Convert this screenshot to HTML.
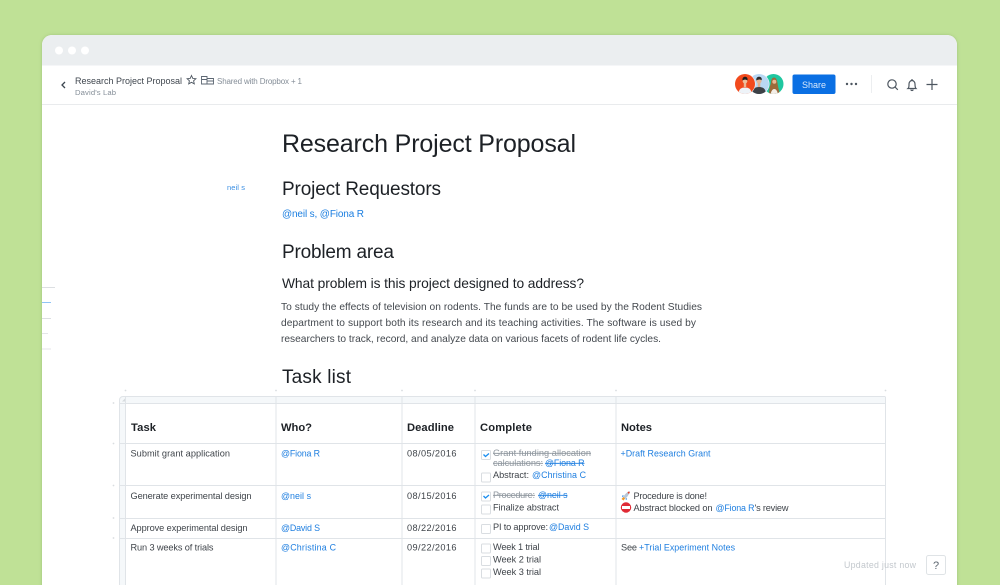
<!DOCTYPE html>
<html><head><meta charset="utf-8"><title>Research Project Proposal</title>
<style>
html,body{margin:0;padding:0;background:#bfe196;width:1000px;height:585px;overflow:hidden}
svg{display:block}
text{font-family:"Liberation Sans",sans-serif;white-space:pre}
.h{fill:#1d2126}
.t{fill:#3f444a;font-size:9.200px}
.l{fill:#1f7fe0;font-size:8.900px}
.s{fill:#8f979f;font-size:9.200px;text-decoration:line-through}
.ls{fill:#1f7fe0;font-size:8.900px;text-decoration:line-through}
.th{fill:#1d2126;font-size:11.200px;font-weight:700}
.cb{fill:#fff;stroke:#d9dde1;stroke-width:1}
.ln{stroke:#e0e4e8;stroke-width:1;fill:none}
.ic{stroke:#4d5660;fill:none;stroke-width:1.2}
</style></head><body>
<svg width="1000" height="585" viewBox="0 0 1000 585" xmlns="http://www.w3.org/2000/svg">
<defs>
<filter id="s" x="-5%" y="-5%" width="110%" height="110%"><feDropShadow dx="0" dy="0" stdDeviation="1.500" flood-color="#6f9350" flood-opacity=".4"/></filter>
<clipPath id="a1"><circle cx="745" cy="84" r="10"/></clipPath>
<clipPath id="a2"><circle cx="759" cy="84" r="10"/></clipPath>
<clipPath id="a3"><circle cx="773.500" cy="84" r="10"/></clipPath>
</defs>
<rect width="1000" height="585" fill="#bfe196"/>
<path d="M42 600V45a10 10 0 0 1 10-10H947a10 10 0 0 1 10 10V600Z" fill="#fff" filter="url(#s)"/>
<path d="M42 65.500V45a10 10 0 0 1 10-10H947a10 10 0 0 1 10 10V65.500Z" fill="#ebeef0"/>
<circle cx="59" cy="50.500" r="4" fill="#fff"/><circle cx="72" cy="50.500" r="4" fill="#fff"/><circle cx="85" cy="50.500" r="4" fill="#fff"/>
<line x1="42" x2="957" y1="104.500" y2="104.500" stroke="#e9ebed"/>

<!-- header left -->
<path d="M65 83.500L62 86.500L65 89.500" fill="none" stroke="#3c4650" stroke-width="1.300" transform="translate(0,-1.500)"/>
<text x="75" y="84" font-size="9" fill="#3f464e" textLength="107">Research Project Proposal</text>
<text x="75" y="95" font-size="7.700" fill="#858e98" textLength="41">David's Lab</text>
<path d="M191.500 75.500l1.300 2.900 3.100.3-2.300 2.100.7 3.100-2.800-1.600-2.800 1.600.7-3.100-2.300-2.100 3.100-.3z" fill="none" stroke="#4d5660" stroke-width=".9"/>
<path d="M201.500 76.500h5.500v7.500h-5.500zM207 78.500h6.500v5.500H207zM201.500 79.500h5.500M207 81h6.500" fill="none" stroke="#5d6773" stroke-width=".9"/>
<text x="217" y="84" font-size="8" fill="#858e98" textLength="85">Shared with Dropbox + 1</text>

<!-- avatars -->
<circle cx="773.500" cy="84" r="10" fill="#1fc7a0"/>
<g clip-path="url(#a3)"><path d="M769 95c0-6 1-9 2-12 0-4 1.500-5.500 3-5.500s3 1.500 3.500 5.500c.5 4 1.500 7 2.500 12z" fill="#9c6a3a"/><path d="M770.500 95c.5-4 2-6 3.800-6s3.200 2 3.700 6z" fill="#f2eee8"/><circle cx="774.300" cy="81.800" r="2" fill="#e9b995"/></g>
<circle cx="759" cy="84" r="10.500" fill="#fff"/>
<circle cx="759" cy="84" r="10" fill="#b9d8f4"/>
<g clip-path="url(#a2)"><path d="M752 95c0-6 2.500-8 7-8s7 2 7 8z" fill="#3c4146"/><rect x="757.700" y="83" width="2.600" height="4" fill="#e0b090"/><circle cx="759" cy="81" r="2.500" fill="#e6b795"/><path d="M756.300 80.500c-.3-2.500 1-3.700 2.800-3.700s3 1 2.600 3.500c-1.500-1.200-3.500-1-5.400.2z" fill="#2a2a2c"/></g>
<circle cx="745" cy="84" r="10.500" fill="#fff"/>
<circle cx="745" cy="84" r="10" fill="#f24a1d"/>
<g clip-path="url(#a1)"><path d="M738.500 95c0-6 2.500-7.500 6.500-7.500s6.500 1.500 6.500 7.500z" fill="#eef3f8"/><rect x="743.800" y="83" width="2.400" height="4" fill="#e8b896"/><circle cx="745" cy="81" r="2.400" fill="#eebf9c"/><path d="M742.500 80.500c-.3-2.500 1-3.700 2.600-3.700s2.800 1.200 2.400 3.700c-1.500-1.200-3.200-1.200-5 0z" fill="#1e1a1a"/></g>

<!-- share -->
<rect x="792.500" y="74.500" width="43" height="19.500" rx="2" fill="#0a6fe3"/>
<text x="802" y="88" font-size="9" fill="#d8e8fb" textLength="24">Share</text>
<circle cx="847" cy="84" r="1.200" fill="#4d5660"/><circle cx="851.500" cy="84" r="1.200" fill="#4d5660"/><circle cx="856" cy="84" r="1.200" fill="#4d5660"/>
<line x1="871.500" x2="871.500" y1="75" y2="93" stroke="#eceef0"/>
<circle cx="892" cy="84" r="4.200" class="ic"/><path d="M895 87l2.800 2.800" class="ic" stroke-width="1.400"/>
<path d="M908 88.500c1.200-1 1-2.500 1-4.500 0-2 1.500-3.500 3-3.500s3 1.500 3 3.500c0 2 0 3.500 1 4.500zM912 79v1.500M910.800 89.500c.3 1.300 2.100 1.300 2.400 0" class="ic" stroke-width="1.100"/>
<path d="M932 79v11M926.500 84.500h11" class="ic" stroke-width="1.300"/>

<!-- left outline markers & mention -->
<text x="227" y="190" font-size="7.500" fill="#3b8fe3" textLength="18">neil s</text>
<path d="M42 287.500h13" stroke="#dcdfe2"/><path d="M42 302.500h9" stroke="#90c4f5"/><path d="M42 318.500h9" stroke="#dcdfe2"/><path d="M42 333.500h6" stroke="#e4e6e8"/><path d="M42 349h9" stroke="#e4e6e8"/>

<!-- doc -->
<text x="282" y="152" font-size="25" class="h" textLength="294">Research Project Proposal</text>
<text x="282" y="195" font-size="19" class="h" textLength="159">Project Requestors</text>
<text x="282" y="217" font-size="10" fill="#1b7ee0" textLength="82">@neil s, @Fiona R</text>
<text x="282" y="258" font-size="19" class="h" textLength="112">Problem area</text>
<text x="282" y="288" font-size="13.800" class="h" textLength="302">What problem is this project designed to address?</text>
<text x="281" y="310" font-size="10.200" fill="#43484e" textLength="421">To study the effects of television on rodents. The funds are to be used by the Rodent Studies</text>
<text x="281" y="326" font-size="10.200" fill="#43484e" textLength="415">department to support both its research and its teaching activities. The software is used by</text>
<text x="281" y="342" font-size="10.200" fill="#43484e" textLength="380">researchers to track, record, and analyze data on various facets of rodent life cycles.</text>
<text x="282" y="383" font-size="19" class="h" textLength="69">Task list</text>

<!-- table chrome -->
<path d="M119 585V400a4 4 0 0 1 4-4H885.500V403H125.500V585Z" fill="#f5f8fa"/>
<path d="M119.500 585V400a3.500 3.500 0 0 1 3.500-3.500H885.500" class="ln" stroke="#e8ebee"/>
<g fill="#d9dde0"><circle cx="125.500" cy="390.500" r=".9"/><circle cx="276" cy="390.500" r=".9"/><circle cx="402" cy="390.500" r=".9"/><circle cx="475" cy="390.500" r=".9"/><circle cx="616" cy="390.500" r=".9"/><circle cx="885.500" cy="390.500" r=".9"/>
<circle cx="113.500" cy="403" r=".9"/><circle cx="113.500" cy="443.500" r=".9"/><circle cx="113.500" cy="485.500" r=".9"/><circle cx="113.500" cy="518" r=".9"/><circle cx="113.500" cy="538" r=".9"/></g>
<path d="M119 403.500H885.500M119 443.500H885.500M119 485.500H885.500M119 518.500H885.500M119 538.500H885.500" class="ln"/>
<path d="M125.500 397V585M276 397V585M402 397V585M475 397V585M616 397V585M885.500 397V585" class="ln"/>
<path d="M122 401.500l3-3v3z" fill="#d5dadd"/>

<!-- table head -->
<text x="131" y="431" class="th" textLength="25">Task</text>
<text x="281" y="431" class="th" textLength="31">Who?</text>
<text x="407" y="431" class="th" textLength="47">Deadline</text>
<text x="480" y="431" class="th" textLength="52">Complete</text>
<text x="621" y="431" class="th" textLength="31">Notes</text>

<!-- row 1 -->
<text x="130.500" y="456.500" class="t" textLength="99.500">Submit grant application</text>
<text x="281" y="456.500" class="l" textLength="39">@Fiona R</text>
<text x="407" y="456.500" class="t" textLength="49.500">08/05/2016</text>
<rect x="481.500" y="450.500" width="9" height="9" rx="1" class="cb"/>
<path d="M483.500 454.500l2 2 3.500-3" fill="none" stroke="#1a8ef0" stroke-width="1.300"/>
<text x="493" y="456" class="s" textLength="98">Grant funding allocation</text>
<text x="493" y="466" class="s" textLength="50">calculations:</text>
<text x="545" y="466" class="ls" textLength="39.500">@Fiona R</text>
<text x="493" y="478" class="t" textLength="36">Abstract:</text>
<text x="532" y="478" class="l" textLength="54">@Christina C</text>
<rect x="481.500" y="473" width="9" height="9" rx="1" class="cb"/>
<text x="620.500" y="456.500" class="l" textLength="90">+Draft Research Grant</text>

<!-- row 2 -->
<text x="130.500" y="499" class="t" textLength="121">Generate experimental design</text>
<text x="281" y="499" class="l" textLength="30">@neil s</text>
<text x="407" y="499" class="t" textLength="49.500">08/15/2016</text>
<rect x="481.500" y="492" width="9" height="9" rx="1" class="cb"/>
<path d="M483.500 496l2 2 3.500-3" fill="none" stroke="#1a8ef0" stroke-width="1.300"/>
<text x="493" y="498" class="s" textLength="42">Procedure:</text>
<text x="538" y="498" class="ls" textLength="29.500">@neil s</text>
<text x="493" y="510.500" class="t" textLength="66">Finalize abstract</text>
<rect x="481.500" y="505" width="9" height="9" rx="1" class="cb"/>
<!-- rocket emoji -->
<path d="M623 498.500c.5-3 3-6 7-7.500-.8 4-3.500 7-6 8.500z" fill="#b8c7d6"/><path d="M621.500 499l2-2 1.500 1.500-1.500 2z" fill="#f59a23"/><path d="M622 495.500h2l-1.500 2zM627 498l-.3 2-1.500-1z" fill="#3d8fe0"/><circle cx="628.700" cy="492.600" r="1" fill="#e2432e"/>
<text x="633.500" y="499" class="t" textLength="73.500">Procedure is done!</text>
<circle cx="626" cy="507.500" r="5.200" fill="#e02a35"/><rect x="622" y="506" width="8" height="3" fill="#fff"/>
<text x="633.500" y="511" class="t" textLength="79">Abstract blocked on</text>
<text x="715.500" y="511" class="l" textLength="39">@Fiona R</text>
<text x="754.500" y="511" class="t" textLength="34">'s review</text>

<!-- row 3 -->
<text x="130.500" y="531" class="t" textLength="117">Approve experimental design</text>
<text x="281" y="531" class="l" textLength="39">@David S</text>
<text x="407" y="531" class="t" textLength="49.500">08/22/2016</text>
<rect x="481.500" y="524.500" width="9" height="9" rx="1" class="cb"/>
<text x="493" y="530" class="t" textLength="55">PI to approve:</text>
<text x="549" y="530" class="l" textLength="40">@David S</text>

<!-- row 4 -->
<text x="130.500" y="550.500" class="t" textLength="83">Run 3 weeks of trials</text>
<text x="281" y="550.500" class="l" textLength="55">@Christina C</text>
<text x="407" y="550.500" class="t" textLength="49.500">09/22/2016</text>
<rect x="481.500" y="544" width="9" height="9" rx="1" class="cb"/>
<rect x="481.500" y="556.500" width="9" height="9" rx="1" class="cb"/>
<rect x="481.500" y="569" width="9" height="9" rx="1" class="cb"/>
<text x="493" y="550" class="t" textLength="46.500">Week 1 trial</text>
<text x="493" y="562.500" class="t" textLength="48">Week 2 trial</text>
<text x="493" y="575" class="t" textLength="48">Week 3 trial</text>
<text x="621" y="550.500" class="t" textLength="16">See</text>
<text x="639" y="550.500" class="l" textLength="96">+Trial Experiment Notes</text>

<!-- footer status -->
<text x="844" y="568" font-size="8.800" fill="#c3c8cd" textLength="72">Updated just now</text>
<rect x="926.500" y="555.500" width="19" height="19" rx="2" fill="#fff" stroke="#dfe3e6"/>
<text x="933" y="569" font-size="11" fill="#5d6670">?</text>
</svg>
</body></html>
